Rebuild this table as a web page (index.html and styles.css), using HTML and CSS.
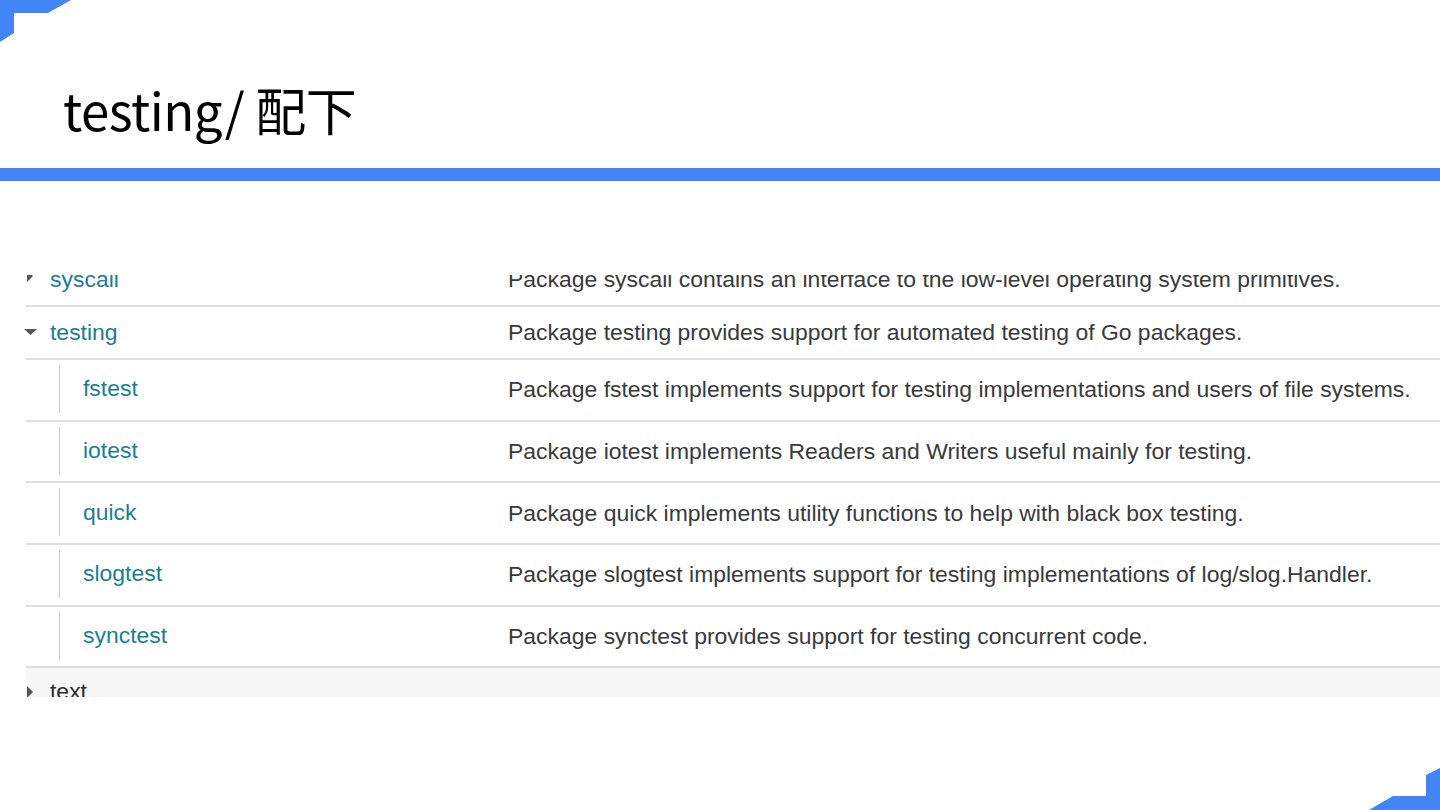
FILE: index.html
```html
<!DOCTYPE html>
<html lang="ja">
<head>
<meta charset="utf-8">
<title>testing/ 配下</title>
<link rel="stylesheet" href="styles.css">
</head>
<body>
<div class="slide">
  <svg class="corner corner-tl" width="72" height="44" viewBox="0 0 72 44"><polygon points="0,0 71,0 48,13 14,13 14,33 0,42" fill="#4285f4"/></svg>
  <header class="header">
    <h1 class="title">testing/ 配下</h1>
  </header>
  <div class="bar"></div>
  <section class="shot">
    <div class="table">
      <div class="row top">
        <div class="name"><span class="tog tog-up"><svg width="7" height="12" viewBox="0 0 7 12"><polygon points="0,0 6,6 0,12" fill="#555"/></svg></span><a class="link">syscall</a></div>
        <div class="desc">Package syscall contains an interface to the low-level operating system primitives.</div>
      </div>
      <div class="row top">
        <div class="name"><span class="tog"><svg width="13" height="7" viewBox="0 0 13 7"><polygon points="0,0 13,0 6.5,6" fill="#555"/></svg></span><a class="link">testing</a></div>
        <div class="desc">Package testing provides support for automated testing of Go packages.</div>
      </div>
      <div class="row sub">
        <div class="name"><span class="guide"><a class="link">fstest</a></span></div>
        <div class="desc">Package fstest implements support for testing implementations and users of file systems.</div>
      </div>
      <div class="row sub">
        <div class="name"><span class="guide"><a class="link">iotest</a></span></div>
        <div class="desc">Package iotest implements Readers and Writers useful mainly for testing.</div>
      </div>
      <div class="row sub">
        <div class="name"><span class="guide"><a class="link">quick</a></span></div>
        <div class="desc">Package quick implements utility functions to help with black box testing.</div>
      </div>
      <div class="row sub">
        <div class="name"><span class="guide"><a class="link">slogtest</a></span></div>
        <div class="desc">Package slogtest implements support for testing implementations of log/slog.Handler.</div>
      </div>
      <div class="row sub">
        <div class="name"><span class="guide"><a class="link">synctest</a></span></div>
        <div class="desc">Package synctest provides support for testing concurrent code.</div>
      </div>
      <div class="row top gray">
        <div class="name"><span class="tog"><svg width="7" height="12" viewBox="0 0 7 12"><polygon points="0,0 6,6 0,12" fill="#555"/></svg></span><span class="plain">text</span></div>
        <div class="desc"></div>
      </div>
    </div>
  </section>
  <svg class="corner corner-br" width="72" height="44" viewBox="0 0 72 44"><polygon points="72,44 1,44 25,30 58,30 58,9 72,2" fill="#4285f4"/></svg>
</div>
</body>
</html>
```
FILE: styles.css
```css
html, body {
  margin: 0;
  padding: 0;
  background: #ffffff;
}
.slide {
  position: relative;
  width: 1440px;
  height: 810px;
  overflow: hidden;
  background: #ffffff;
}
.corner {
  position: absolute;
  display: block;
}
.corner-tl {
  left: 0;
  top: 0;
}
.corner-br {
  right: 0;
  bottom: 0;
}
.header {
  height: 168px;
  box-sizing: border-box;
  padding: 84px 0 0 63px;
}
.title {
  margin: 0;
  font-family: "Noto Sans CJK JP", "Noto Sans", sans-serif;
  font-weight: 400;
  font-size: 51px;
  line-height: 1;
  color: #000;
  letter-spacing: -0.5px;
}
.bar {
  height: 13px;
  background: #4285f4;
}
.shot {
  margin-top: 94px;
  height: 422px;
  overflow: hidden;
}
.table {
  margin-top: -21px;
  font-family: "Liberation Sans", Arial, sans-serif;
  font-size: 22.95px;
}
.row {
  margin-left: 26px;
  display: grid;
  grid-template-columns: 482px 1fr;
  align-items: center;
  border-bottom: 2px solid #dedede;
  box-sizing: border-box;
}
.row.top {
  height: 53px;
}
.row.sub {
  height: 61.7px;
}
.row.gray {
  background: #f7f7f7;
  border-bottom: none;
  height: 60px;
  align-items: start;
  padding-top: 10px;
}
.name {
  display: flex;
  align-items: center;
  height: 100%;
}
.row.top .name {
  margin-left: -2px;
}
.row.gray .name {
  height: auto;
}
.tog {
  width: 13px;
  display: flex;
  justify-content: center;
  align-items: center;
  margin-right: 13px;
}
.tog-up {
  margin-top: -8px;
}
.link {
  color: #1a7f93;
  text-decoration: none;
}
.plain {
  color: #2b2b2b;
}
.guide {
  margin-left: 33px;
  border-left: 1px solid #c9c9c9;
  padding-left: 23px;
  height: 48px;
  display: flex;
  align-items: center;
  margin-top: -2px;
}
.desc {
  color: #3a3a3a;
  white-space: nowrap;
}
```
